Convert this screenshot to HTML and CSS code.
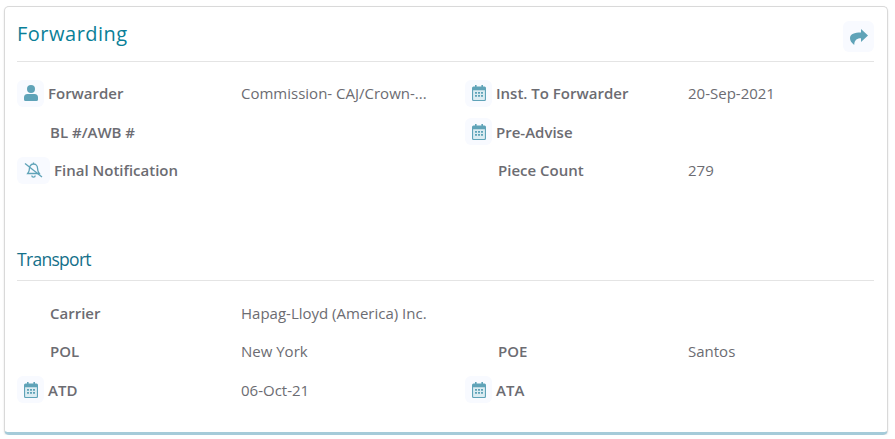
FILE: index.html
```html
<!DOCTYPE html>
<html lang="en">

<head>
	<meta charset="UTF-8">
	<title>Forwarding</title>
	<link rel="stylesheet" href="styles.css">
</head>

<body>
	<svg class="icon-defs" width="0" height="0">
		<symbol id="i-cal" viewBox="0 0 14 16">
			<path d="M3 0h1.600v2H3zM9.400 0H11v2H9.400z"/>
			<rect class="cal-fill" x="1" y="5" width="12" height="10"/>
			<path fill-rule="evenodd" d="M1.500 1.500h11A1.500 1.500 0 0 1 14 3v11.500a1.500 1.500 0 0 1-1.500 1.500h-11A1.500 1.500 0 0 1 0 14.500V3a1.500 1.500 0 0 1 1.500-1.500zM1.100 5.200v9.100c0 .3.200.6.600.6h10.600c.4 0 .6-.3.600-.6V5.200z"/>
			<path d="M3 7h2v1.700H3zM6 7h2v1.700H6zM9 7h2v1.700H9zM3 10h2v1.700H3zM6 10h2v1.700H6zM9 10h2v1.700H9z"/>
		</symbol>
	</svg>

	<div class="card">
		<div class="card-head">
			<h2 class="title">Forwarding</h2>
			<span class="icon-box share">
				<svg width="18" height="16" viewBox="0 0 18 16"><path d="M11 0 18 6.500 11 13V9.300C7.500 9.300 4.500 10.500 4.200 16 1.500 14 0 11.500 0 9.300 0 5 4.500 3.500 11 3.500z"/></svg>
			</span>
		</div>

		<div class="fields">
			<div class="field">
				<span class="icon-box"><svg width="14" height="16" viewBox="0 0 14 16"><circle cx="7" cy="4" r="4"/><path d="M3.500 9h7A3.500 3.500 0 0 1 14 12.500v2A1.500 1.500 0 0 1 12.500 16h-11A1.500 1.500 0 0 1 0 14.500v-2A3.500 3.500 0 0 1 3.500 9z"/></svg></span>
				<span class="label">Forwarder</span>
			</div>
			<div class="value">Commission- CAJ/Crown-...</div>
			<div class="field">
				<span class="icon-box"><svg width="14" height="16"><use href="#i-cal"/></svg></span>
				<span class="label">Inst. To Forwarder</span>
			</div>
			<div class="value">20-Sep-2021</div>

			<div class="field no-icon"><span class="label">BL #/AWB #</span></div>
			<div class="value"></div>
			<div class="field">
				<span class="icon-box"><svg width="14" height="16"><use href="#i-cal"/></svg></span>
				<span class="label">Pre-Advise</span>
			</div>
			<div class="value"></div>

			<div class="field">
				<span class="icon-box wide"><svg class="bell" width="19" height="16" viewBox="0 0 19 16"><path d="M9.500 2a4 4 0 0 1 4 4c0 2.800.8 4.200 1.800 5.500H3.700c1-1.300 1.800-2.700 1.800-5.500a4 4 0 0 1 4-4zM9.500 .5V2M7.800 13.500a1.700 1.700 0 0 0 3.400 0"/><path d="M1 1.500 18 15"/></svg></span>
				<span class="label">Final Notification</span>
			</div>
			<div class="value"></div>
			<div class="field no-icon"><span class="label">Piece Count</span></div>
			<div class="value">279</div>
		</div>

		<h3 class="subtitle">Transport</h3>

		<div class="fields transport">
			<div class="field no-icon"><span class="label">Carrier</span></div>
			<div class="value">Hapag-Lloyd (America) Inc.</div>
			<div class="field no-icon"></div>
			<div class="value"></div>

			<div class="field no-icon"><span class="label">POL</span></div>
			<div class="value">New York</div>
			<div class="field no-icon"><span class="label">POE</span></div>
			<div class="value">Santos</div>

			<div class="field">
				<span class="icon-box"><svg width="14" height="16"><use href="#i-cal"/></svg></span>
				<span class="label">ATD</span>
			</div>
			<div class="value">06-Oct-21</div>
			<div class="field">
				<span class="icon-box"><svg width="14" height="16"><use href="#i-cal"/></svg></span>
				<span class="label">ATA</span>
			</div>
			<div class="value"></div>
		</div>
	</div>
</body>

</html>
```

FILE: styles.css
```css
body {
	margin: 0;
	padding: 6px 7px 0 4px;
	background-color: #fff;
	font-family: "Open Sans", sans-serif;
	font-size: 15px;
	color: #6c6c72;
}

.icon-defs {
	position: absolute;
}

.card {
	height: 429px;
	box-sizing: border-box;
	padding: 0 13px 0 12px;
	background-color: #fff;
	border: 1px solid #d9d9d9;
	border-bottom: 3px solid #a5cbd9;
	border-radius: 5px;
	box-shadow: 0 1px 2px rgba(0, 0, 0, 0.12);
}

.card-head {
	display: flex;
	justify-content: space-between;
	align-items: center;
	height: 54px;
	border-bottom: 1px solid #e4e4e4;
}

.title {
	margin: 0 0 2px;
	font-size: 20px;
	font-weight: 400;
	letter-spacing: 0.5px;
	color: #0a7f98;
}

.subtitle {
	margin: 49px 0 0;
	height: 41px;
	line-height: 40px;
	font-size: 17.500px;
	font-weight: 400;
	letter-spacing: -0.7px;
	color: #15708a;
	border-bottom: 1px solid #e4e4e4;
}

.fields {
	display: grid;
	grid-template-columns: 224px 224px 223px 1fr;
	grid-auto-rows: 38.500px;
	padding-top: 12px;
	align-items: center;
}

.fields.transport {
	padding-top: 13px;
}

.field {
	display: flex;
	align-items: center;
	gap: 4px;
}

.field.no-icon {
	padding-left: 33px;
}

.label {
	font-weight: 600;
}

.icon-box {
	display: flex;
	justify-content: center;
	align-items: center;
	width: 27px;
	height: 27px;
	border-radius: 6px;
	background-color: #f8faff;
	fill: #5fa3b8;
}

.icon-box.wide {
	width: 33px;
}

.icon-box.share {
	width: 31px;
	height: 31px;
	margin-top: 5px;
}

.cal-fill {
	fill: #dcecf2;
}

.bell {
	fill: none;
	stroke: #5fa3b8;
	stroke-width: 1.300;
}
```
